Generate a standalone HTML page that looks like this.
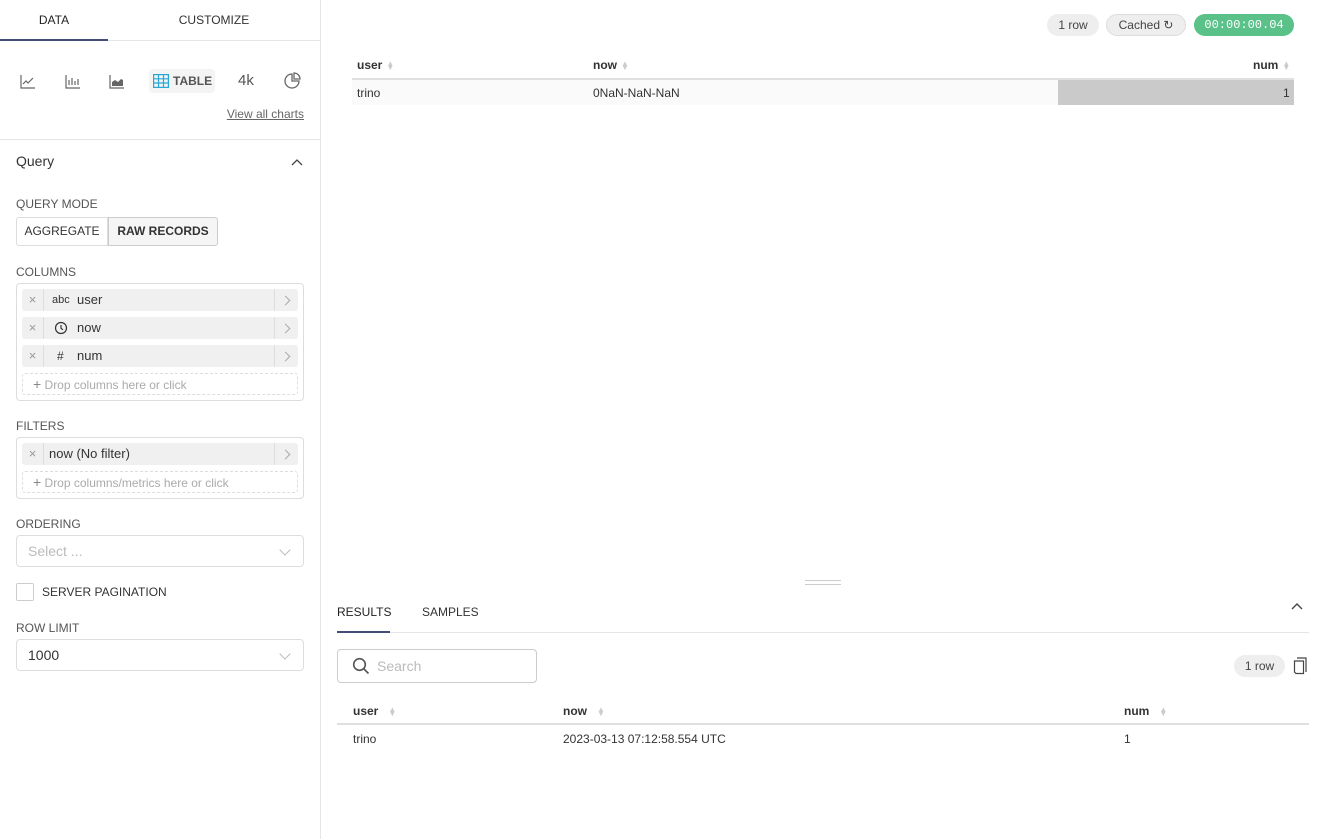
<!DOCTYPE html>
<html><head><meta charset="utf-8"><style>
*{box-sizing:border-box;margin:0;padding:0}
body{width:1324px;height:839px;font-family:"Liberation Sans",sans-serif;color:#333;background:#fff;position:relative;overflow:hidden;font-size:13px}
.a{position:absolute}
.lbl{position:absolute;left:16px;font-size:12px;color:#555}
.chip{position:absolute;left:22px;width:276px;height:22px;background:#f0f0f0;border-radius:3px}
.chip .x{position:absolute;left:0;top:0;width:22px;height:22px;border-right:1px solid #ddd;color:#999;text-align:center;line-height:22px;font-size:13px}
.chip .ar{position:absolute;right:0;top:0;width:24px;height:22px;border-left:1px solid #ddd}
.chip .ar:after{content:"";position:absolute;left:7px;top:8px;width:6px;height:6px;border-right:1.2px solid #aaa;border-top:1.2px solid #aaa;transform:rotate(45deg)}
.drop{position:absolute;left:22px;width:276px;height:22px;border:1px dashed #ddd;border-radius:3px;color:#aaa;font-size:12px;line-height:20px;padding-left:10px}
.box{position:absolute;left:16px;width:288px;border:1px solid #ddd;border-radius:4px}
.sel{position:absolute;left:16px;width:288px;height:32px;border:1px solid #ddd;border-radius:4px;padding-left:11px;line-height:30px;font-size:14px}
.sel:after{content:"";position:absolute;right:14px;top:10px;width:7px;height:7px;border-right:1px solid #bbb;border-bottom:1px solid #bbb;transform:rotate(45deg)}
.pill{position:absolute;height:22px;border-radius:11px;background:#eee;font-size:12px;line-height:22px;text-align:center;color:#444}
.th{font-weight:bold;font-size:12px;color:#333}
.sort{display:inline-block;color:#ccc;font-size:8px;vertical-align:middle;margin-left:4px;line-height:4px}
</style></head><body>
<div class="a" style="left:320px;top:0;width:1px;height:839px;background:#e5e5e5"></div>
<div class="a" style="left:0;top:13px;width:108px;text-align:center;font-size:12px;color:#222">DATA</div>
<div class="a" style="left:108px;top:13px;width:212px;text-align:center;font-size:12px;color:#333">CUSTOMIZE</div>
<div class="a" style="left:0;top:40px;width:320px;height:1px;background:#e5e5e5"></div>
<div class="a" style="left:0;top:39px;width:108px;height:2px;background:#444d7a"></div>
<svg class="a" style="left:20px;top:73px" width="16" height="16" viewBox="0 0 16 16" fill="none" stroke="#666" stroke-width="1.2"><path d="M1 2v13h14"/><path d="M3 11l3-3 2 2 5-5"/></svg>
<svg class="a" style="left:65px;top:73px" width="16" height="16" viewBox="0 0 16 16" fill="none" stroke="#666" stroke-width="1.2"><path d="M1 2v13h14M4 12V7M7 12V5M10 12V8M13 12V6"/></svg>
<svg class="a" style="left:109px;top:73px" width="16" height="16" viewBox="0 0 16 16"><path d="M1 2v13h14" fill="none" stroke="#666" stroke-width="1.2"/><path d="M3 13V9l3-2 3 2 3-3 2 1v6z" fill="#666"/></svg>
<div class="a" style="left:149px;top:69px;width:66px;height:24px;background:#f4f4f4;border-radius:4px"></div>
<svg class="a" style="left:153px;top:74px" width="16" height="14" viewBox="0 0 16 14" fill="none" stroke="#29a7d6" stroke-width="1.2"><rect x="0.6" y="0.6" width="14.8" height="12.8"/><path d="M0.6 4.8h14.8M0.6 9h14.8M5.5 0.6v12.8M10.5 0.6v12.8"/></svg>
<div class="a" style="left:173px;top:74px;font-size:12px;color:#555;font-weight:bold">TABLE</div>
<div class="a" style="left:238px;top:72px;font-size:15px;color:#555">4k</div>
<svg class="a" style="left:284px;top:72px" width="17" height="17" viewBox="0 0 17 17" fill="none" stroke="#666" stroke-width="1.3"><path d="M8 2a7 7 0 1 0 7 7H8z"/><path d="M10 1a6 6 0 0 1 6 6h-6z"/></svg>
<div class="a" style="right:1020px;top:107px;font-size:12px;color:#666;text-decoration:underline">View all charts</div>
<div class="a" style="left:0;top:139px;width:320px;height:1px;background:#e5e5e5"></div>
<div class="a" style="left:16px;top:153px;font-size:14px;color:#333">Query</div>
<svg class="a" style="left:291px;top:158px" width="12" height="8" viewBox="0 0 12 8" fill="none" stroke="#444" stroke-width="1.3"><path d="M1 7l5-5 5 5"/></svg>
<div class="lbl" style="top:197px">QUERY MODE</div>
<div class="a" style="left:16px;top:217px;width:92px;height:29px;border:1px solid #ddd;border-radius:3px 0 0 3px;font-size:12px;line-height:27px;text-align:center;color:#333">AGGREGATE</div>
<div class="a" style="left:108px;top:217px;width:110px;height:29px;border:1px solid #ccc;background:#f5f5f5;border-radius:0 3px 3px 0;font-size:12px;line-height:27px;text-align:center;font-weight:bold;color:#333">RAW RECORDS</div>
<div class="lbl" style="top:265px">COLUMNS</div>
<div class="box" style="top:283px;height:118px"></div>
<div class="chip" style="top:289px"><span class="x">×</span><span class="a" style="left:30px;top:5px;font-size:11px">abc</span><span class="a" style="left:55px;top:3px">user</span><span class="ar"></span></div>
<div class="chip" style="top:317px"><span class="x">×</span><svg class="a" style="left:32px;top:4px" width="14" height="14" viewBox="0 0 14 14" fill="none" stroke="#333" stroke-width="1.2"><circle cx="7" cy="7" r="5.5"/><path d="M7 4v3.3l2 1.5"/></svg><span class="a" style="left:55px;top:3px">now</span><span class="ar"></span></div>
<div class="chip" style="top:345px"><span class="x">×</span><span class="a" style="left:35px;top:4px;font-size:12px">#</span><span class="a" style="left:55px;top:3px">num</span><span class="ar"></span></div>
<div class="drop" style="top:373px"><b style="font-weight:normal;color:#888;font-size:14px">+</b> Drop columns here or click</div>
<div class="lbl" style="top:419px">FILTERS</div>
<div class="box" style="top:437px;height:62px"></div>
<div class="chip" style="top:443px"><span class="x">×</span><span class="a" style="left:27px;top:3px">now (No filter)</span><span class="ar"></span></div>
<div class="drop" style="top:471px"><b style="font-weight:normal;color:#888;font-size:14px">+</b> Drop columns/metrics here or click</div>
<div class="lbl" style="top:517px">ORDERING</div>
<div class="sel" style="top:535px;color:#bbb">Select ...</div>
<div class="a" style="left:16px;top:583px;width:18px;height:18px;border:1px solid #ccc;border-radius:2px"></div>
<div class="a" style="left:42px;top:585px;font-size:12px;color:#333">SERVER PAGINATION</div>
<div class="lbl" style="top:621px">ROW LIMIT</div>
<div class="sel" style="top:639px;color:#333">1000</div>
<div class="pill" style="left:1047px;top:14px;width:52px">1 row</div>
<div class="pill" style="left:1106px;top:14px;width:80px;border:1px solid #ddd;line-height:20px">Cached &#x21bb;</div>
<div class="pill" style="left:1194px;top:14px;width:100px;background:#5ac189;color:#fff;font-family:'Liberation Mono',monospace;font-size:12px">00:00:00.04</div>
<div class="a th" style="left:357px;top:58px">user<span class="sort">▲<br>▼</span></div>
<div class="a th" style="left:593px;top:58px">now<span class="sort">▲<br>▼</span></div>
<div class="a th" style="left:1253px;top:58px">num<span class="sort">▲<br>▼</span></div>
<div class="a" style="left:352px;top:78px;width:942px;height:2px;background:#e0e0e0"></div>
<div class="a" style="left:352px;top:80px;width:942px;height:25px;background:#fafafa"></div>
<div class="a" style="left:1058px;top:80px;width:236px;height:25px;background:#cacaca"></div>
<div class="a" style="left:357px;top:86px;font-size:12px">trino</div>
<div class="a" style="left:593px;top:86px;font-size:12px">0NaN-NaN-NaN</div>
<div class="a" style="left:1283px;top:86px;font-size:12px">1</div>
<div class="a" style="left:805px;top:580px;width:36px;height:1px;background:#ccc"></div>
<div class="a" style="left:805px;top:584px;width:36px;height:1px;background:#ccc"></div>
<div class="a" style="left:337px;top:605px;font-size:12px;color:#222">RESULTS</div>
<div class="a" style="left:422px;top:605px;font-size:12px;color:#333">SAMPLES</div>
<svg class="a" style="left:1291px;top:602px" width="12" height="8" viewBox="0 0 12 8" fill="none" stroke="#444" stroke-width="1.4"><path d="M1 7l5-5 5 5"/></svg>
<div class="a" style="left:337px;top:632px;width:972px;height:1px;background:#e5e5e5"></div>
<div class="a" style="left:337px;top:631px;width:53px;height:2px;background:#444d7a"></div>
<div class="a" style="left:337px;top:649px;width:200px;height:34px;border:1px solid #ccc;border-radius:4px"></div>
<svg class="a" style="left:352px;top:657px" width="18" height="18" viewBox="0 0 18 18" fill="none" stroke="#555" stroke-width="1.6"><circle cx="7.5" cy="7.5" r="5.8"/><path d="M12 12l4.5 4.5"/></svg>
<div class="a" style="left:377px;top:658px;font-size:14px;color:#bbb">Search</div>
<div class="pill" style="left:1234px;top:655px;width:51px">1 row</div>
<svg class="a" style="left:1293px;top:657px" width="14" height="18" viewBox="0 0 14 18" fill="none" stroke="#444" stroke-width="1.2"><path d="M4 1h9v14"/><path d="M1.5 4h9v12.5H3L1.5 15z"/></svg>
<div class="a th" style="left:353px;top:704px">user<span class="sort" style="margin-left:10px">▲<br>▼</span></div>
<div class="a th" style="left:563px;top:704px">now<span class="sort" style="margin-left:10px">▲<br>▼</span></div>
<div class="a th" style="left:1124px;top:704px">num<span class="sort" style="margin-left:10px">▲<br>▼</span></div>
<div class="a" style="left:337px;top:723px;width:972px;height:2px;background:#e0e0e0"></div>
<div class="a" style="left:353px;top:732px;font-size:12px">trino</div>
<div class="a" style="left:563px;top:732px;font-size:12px">2023-03-13 07:12:58.554 UTC</div>
<div class="a" style="left:1124px;top:732px;font-size:12px">1</div>
</body></html>
